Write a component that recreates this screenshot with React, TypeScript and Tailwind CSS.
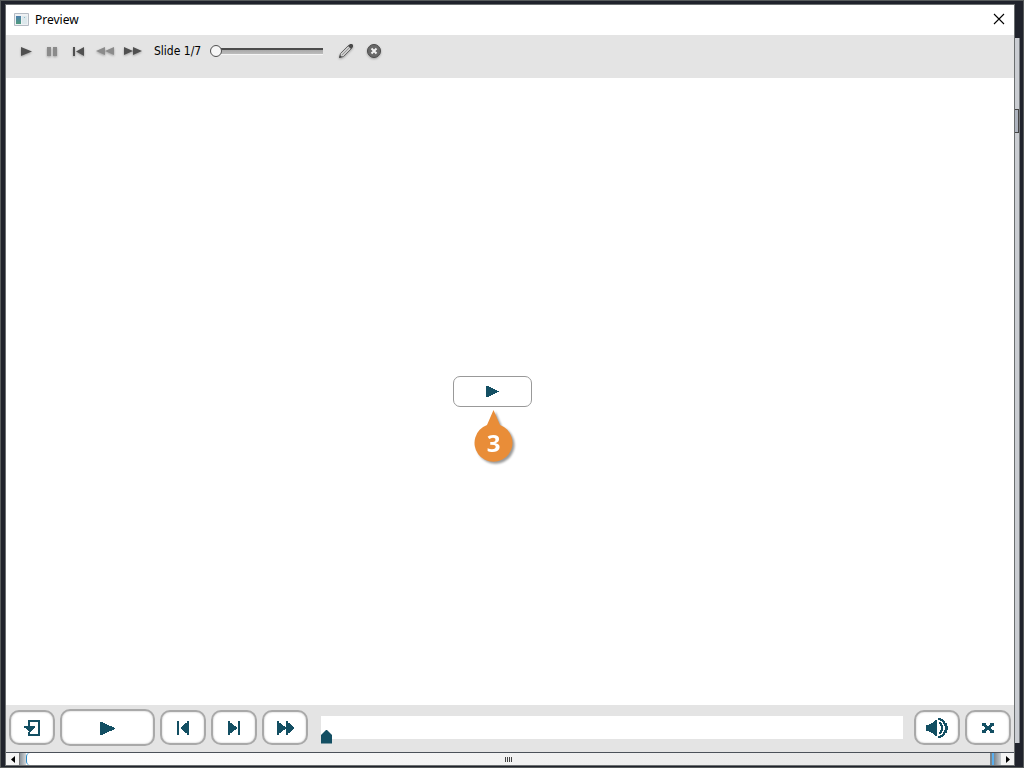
import React, { useState } from "react";

type ControlProps = {
  label: string;
  wide?: boolean;
  children: React.ReactNode;
};

const ToolButton = ({ label, children }: ControlProps) => {
  return (
    <button
      type="button"
      aria-label={label}
      className="flex h-5 w-5 items-center justify-center drop-shadow-[0_1px_1px_rgba(0,0,0,0.3)]"
    >
      {children}
    </button>
  );
};

const PlayerButton = ({ label, wide, children }: ControlProps) => {
  return (
    <button
      type="button"
      aria-label={label}
      className={`flex shrink-0 items-center justify-center rounded-[10px] border-2 border-[#a9a9a9] bg-white text-[#134f63] shadow-[inset_0_0_2px_#bbb] ${
        wide ? "h-[37px] w-[95px]" : "h-[35px] w-[46px]"
      }`}
    >
      {children}
    </button>
  );
};

const PreviousIcon = () => (
  <svg width="12" height="15" viewBox="0 -1 12 15" fill="currentColor">
    <path d="M0 0h2v14H0z" />
    <path d="M12 0v14h-2v-2H8v-1H7v-1H6V9H5V8H4V6h1V5h1V4h1V3h1V2h2V0z" />
  </svg>
);

const NextIcon = () => (
  <svg width="12" height="15" viewBox="0 -1 12 15" fill="currentColor">
    <path d="M10 0h2v14h-2z" />
    <path d="M0 0v14h2v-2h2v-1h1v-1h1V9h2V8h1V6H8V5H6V4H5V3H4V2H2V0z" />
  </svg>
);

const ExitIcon = () => (
  <svg width="16" height="17" viewBox="0 -1 16 17" fill="currentColor">
    <path d="M4 0h12v16H4v-4h2v2h8V2H6v4H4z" />
    <path d="M0 6h11v2h-1v1H9v1H8v1H7v1H5v-1H4v-1H3V9H2V8H0z" />
  </svg>
);

const ForwardIcon = () => (
  <svg width="18" height="15" viewBox="0 -1 18 15" fill="currentColor">
    <path d="M1 0h2v2h2v1h1v1h1v1h2v1h1V0h2v2h2v1h1v1h1v1h1v1h1v2h-1v1h-1v1h-1v1h-1v1h-2v2h-2V8H9v1H7v1H6v1H5v1H3v2H1z" />
  </svg>
);

const VolumeIcon = () => (
  <svg width="22" height="23" viewBox="0 -1 22 23" fill="currentColor">
    <path d="M0 8h3V7h2V6h2V5h1V4h1V3h2v16H9v-1H8v-1H7v-1H5v-1H3v-1H0z" />
    <path d="M13 5h2v1h1v2h1v6h-1v2h-1v1h-2v-2h1v-2h1V9h-1V7h-1z" />
    <path d="M12 1h3v1h2v1h1v1h1v2h2v3h1v4h-1v3h-2v2h-1v1h-1v1h-2v1h-3v-2h2v-1h2v-1h1v-2h1v-2h1V9h-1V7h-1V5h-1V4h-2V3h-2z" />
  </svg>
);

const CloseIcon = () => (
  <svg width="12" height="11" viewBox="0 -1 12 11" fill="currentColor">
    <path d="M0 0h4v2h1v1h2V2h1V0h4v3h-2v1H9v2h1v1h2v3H8V8H7V7H5v1H4v2H0V7h2V6h1V4H2V3H0z" />
  </svg>
);

const TitleBar = () => {
  return (
    <header className="flex h-[30px] shrink-0 items-center bg-white pl-2 pr-[9px]">
      <svg width="15" height="13" viewBox="0 0 15 13" className="mb-[2px]">
        <defs>
          <linearGradient id="pane" x1="0" y1="0" x2="0" y2="1">
            <stop offset="0" stopColor="#4b7fae" />
            <stop offset="1" stopColor="#4f9b7c" />
          </linearGradient>
        </defs>
        <path d="M.5.5h14v12H.5z" fill="#eef1f4" stroke="#b4bbc4" />
        <path d="M2 3h5v8H2z" fill="url(#pane)" />
        <path d="M8 3h5v8H8z" fill="#dce8ec" />
        <path d="M10 4h1v1h-1z" fill="#8db9cc" />
      </svg>
      <h1 className="ml-[6px] grow text-[12px] leading-4">Preview</h1>
      <button type="button" aria-label="Close window">
        <svg width="12" height="12" viewBox="0 0 12 12" className="mb-[2px]">
          <path d="M1 1l10 10M11 1L1 11" stroke="#000" strokeWidth="1.1" />
        </svg>
      </button>
    </header>
  );
};

const Toolbar = () => {
  const [slide, setSlide] = useState(1);

  return (
    <div className="flex h-[43px] shrink-0 items-start bg-[#e4e4e4] pl-[10px] pt-[6px]">
      <div className="flex gap-[6px]">
        <ToolButton label="Play">
          <svg width="11" height="9" viewBox="0 0 11 9" fill="#505050">
            <path d="M0 0l11 4.5L0 9z" />
          </svg>
        </ToolButton>
        <ToolButton label="Pause">
          <svg width="10" height="9" viewBox="0 0 10 9" fill="#8b8b8b">
            <path d="M0 0h4v9H0zM6 0h4v9H6z" />
          </svg>
        </ToolButton>
        <ToolButton label="Rewind">
          <svg width="11" height="9" viewBox="0 0 11 9" fill="#505050">
            <path d="M0 0h2v9H0zM11 0v9L3 4.5z" />
          </svg>
        </ToolButton>
      </div>
      <div className="ml-[7px] flex gap-2">
        <ToolButton label="Back">
          <svg width="18" height="8" viewBox="0 0 18 8" fill="#8b8b8b">
            <path d="M9 0v8L0 4zM18 0v8L9 4z" />
          </svg>
        </ToolButton>
        <ToolButton label="Forward">
          <svg width="18" height="8" viewBox="0 0 18 8" fill="#505050">
            <path d="M0 0l9 4-9 4zM9 0l9 4-9 4z" />
          </svg>
        </ToolButton>
      </div>
      <label
        htmlFor="slide"
        className="ml-[11px] whitespace-nowrap font-['DejaVu_Sans_Condensed','DejaVu_Sans',sans-serif] text-[12px] leading-5"
      >
        Slide {slide}/7
      </label>
      <input
        id="slide"
        type="range"
        min={1}
        max={7}
        value={slide}
        onChange={(e) => setSlide(Number(e.target.value))}
        className="ml-[9px] mt-1 h-3 w-[114px] appearance-none bg-[linear-gradient(#4c4c4c_0_2px,#a8a8a8_2px,#bdbdbd_6px,#f5f5f5_6px)] bg-[length:112px_7px] bg-position-[1px_3px] bg-no-repeat [&::-webkit-slider-thumb]:h-3 [&::-webkit-slider-thumb]:w-3 [&::-webkit-slider-thumb]:appearance-none [&::-webkit-slider-thumb]:rounded-full [&::-webkit-slider-thumb]:border [&::-webkit-slider-thumb]:border-[#505050] [&::-webkit-slider-thumb]:bg-[#f6f6f6]"
      />
      <div className="ml-3 flex gap-2">
        <ToolButton label="Edit">
          <svg width="14" height="14" viewBox="0 0 14 14">
            <path
              d="M.5 13.5l1-4L9.500 1.500l3 3L4.500 12.500z"
              fill="#ccc"
              stroke="#666"
            />
            <path d="M0 14l1-3 2 2zM9 2l2-2h2l1 1v2l-2 2z" fill="#4a4a4a" />
            <path d="M3 11l7-7" stroke="#999" />
          </svg>
        </ToolButton>
        <ToolButton label="Close preview">
          <svg width="14" height="14" viewBox="0 0 14 14">
            <circle cx="7" cy="7" r="6.500" fill="#696969" stroke="#4b4b4b" />
            <path
              d="M4.500 4.500l5 5M9.500 4.500l-5 5"
              stroke="#f2f2f2"
              strokeWidth="2"
            />
          </svg>
        </ToolButton>
      </div>
    </div>
  );
};

const Stage = () => {
  return (
    <main className="flex grow items-center justify-center bg-white pr-[35px]">
      <div className="relative">
        <button
          type="button"
          aria-label="Start slide"
          className="flex h-[31px] w-[79px] items-center justify-center rounded-[7px] border border-[#999] bg-white text-[#134f63]"
        >
          <svg width="13" height="11" viewBox="0 0 13 11" fill="currentColor">
            <path d="M0 0h3v1h2v1h2v1h2v1h2v1h2v1h-2v1H9v1H7v1H5v1H3v1H0z" />
          </svg>
        </button>
        <div className="absolute left-[21px] top-[34px] flex h-[52px] w-[39px] items-end justify-center drop-shadow-[2px_2px_1px_rgba(0,0,0,0.4)]">
          <svg
            width="39"
            height="52"
            viewBox="0 0 39 52"
            fill="#e98d38"
            className="absolute inset-0"
          >
            <path d="M19.500 0L26 15a19 19 0 1 1-13 0z" />
          </svg>
          <span className="relative pb-[3px] font-['Open_Sans','Noto_Sans',sans-serif] text-[24px] font-bold leading-8 text-white">
            3
          </span>
        </div>
      </div>
    </main>
  );
};

const PlayerBar = () => {
  return (
    <footer className="flex h-[47px] shrink-0 items-center gap-[5px] bg-[#e4e4e4] px-[3px] pb-[2px]">
      <PlayerButton label="Exit">
        <ExitIcon />
      </PlayerButton>
      <PlayerButton label="Play" wide>
        <svg width="15" height="15" viewBox="0 -2 15 15" fill="currentColor">
          <path d="M0 0h3v1h2v1h2v1h2v1h3v1h2v1h1v1h-1v1h-2v1H9v1H7v1H5v1H3v1H0z" />
        </svg>
      </PlayerButton>
      <PlayerButton label="Previous slide">
        <PreviousIcon />
      </PlayerButton>
      <PlayerButton label="Next slide">
        <NextIcon />
      </PlayerButton>
      <PlayerButton label="Fast forward">
        <ForwardIcon />
      </PlayerButton>
      <input
        type="range"
        aria-label="Progress"
        defaultValue={0}
        className="ml-2 mr-[6px] mt-1 h-7 min-w-0 grow appearance-none bg-[linear-gradient(#fff_0_23px,transparent_23px)] [&::-webkit-slider-thumb]:mt-[14px] [&::-webkit-slider-thumb]:h-[14px] [&::-webkit-slider-thumb]:w-[11px] [&::-webkit-slider-thumb]:appearance-none [&::-webkit-slider-thumb]:bg-[#134f63] [&::-webkit-slider-thumb]:[clip-path:polygon(50%_0,100%_40%,100%_100%,0_100%,0_40%)]"
      />
      <PlayerButton label="Volume">
        <VolumeIcon />
      </PlayerButton>
      <PlayerButton label="Close">
        <CloseIcon />
      </PlayerButton>
    </footer>
  );
};

const BottomScroll = () => {
  return (
    <div className="flex h-[13px] shrink-0 border-t border-[#4b5159] bg-white">
      <button
        type="button"
        aria-label="Scroll left"
        className="flex w-[13px] items-center justify-center bg-[#f4f4f4]"
      >
        <svg width="4" height="7" viewBox="0 0 4 7">
          <path d="M4 0v7L0 3.500z" />
        </svg>
      </button>
      <div className="w-[7px] border-l border-[#777] bg-linear-to-r from-[#8c959c] to-[#d3d6d8]" />
      <div className="flex grow items-center justify-center gap-px rounded-l-sm border-l border-[#2588c5] bg-linear-to-r from-white to-[#e4e4e4]">
        <span className="h-[5px] w-px bg-[#444]" />
        <span className="h-[5px] w-px bg-[#444]" />
        <span className="h-[5px] w-px bg-[#444]" />
        <span className="h-[5px] w-px bg-[#444]" />
      </div>
      <div className="w-[11px] border-l-2 border-[#7b858c] bg-[linear-gradient(90deg,#5ab0f0_0_2px,#7d868d_2px,#c8ccd0)]" />
      <button
        type="button"
        aria-label="Scroll right"
        className="flex w-[13px] items-center justify-center bg-[#f4f4f4]"
      >
        <svg width="4" height="7" viewBox="0 0 4 7">
          <path d="M0 0v7l4-3.500z" />
        </svg>
      </button>
    </div>
  );
};

const App = () => {
  return (
    <div className="flex h-screen border border-[#585c5c] bg-[#20232c] pb-[1px] pl-1 pr-[3px] pt-[3px] font-['Noto_Sans','Open_Sans',sans-serif] text-black">
      <div className="flex min-w-0 grow flex-col border border-[#6b6f70]">
        <TitleBar />
        <Toolbar />
        <Stage />
        <PlayerBar />
        <BottomScroll />
      </div>
      <div className="mb-[23px] mt-[34px] w-[5px] shrink-0 border-r border-[#777b7f] bg-[#cacdd2] pt-[71px]">
        <div className="h-6 border border-l-0 border-[#444] bg-[#aeb4bf]" />
      </div>
    </div>
  );
};

export default App;
